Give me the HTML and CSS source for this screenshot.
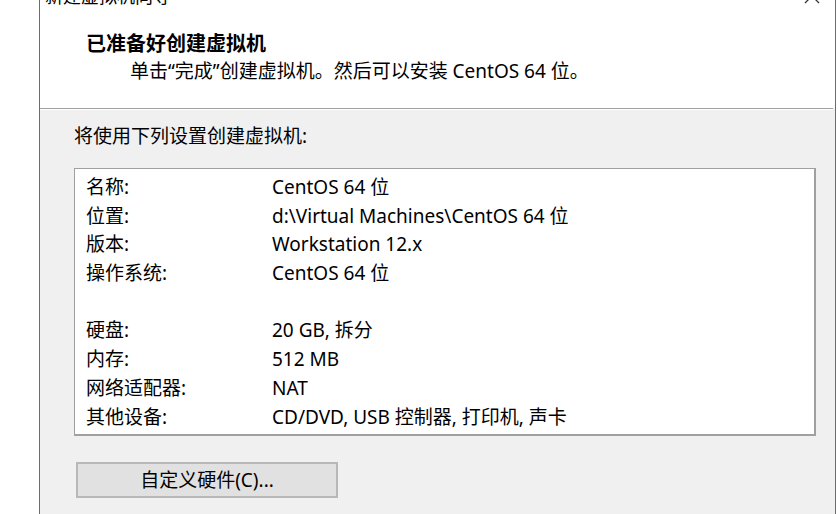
FILE: index.html
```html
<!DOCTYPE html>
<html lang="zh-CN">
<head>
<meta charset="utf-8">
<title>新建虚拟机向导</title>
<link rel="stylesheet" href="styles.css">
</head>
<body>
<div class="window">
  <div class="header">
    <div class="titlebar">
      <span class="title">新建虚拟机向导</span>
      <svg class="close" width="16" height="16" viewBox="0 0 16 16"><path d="M1 1 L15 15 M15 1 L1 15" stroke="#333" stroke-width="1.3" fill="none"/></svg>
    </div>
    <div class="heading">已准备好创建虚拟机</div>
    <div class="subtitle">单击“完成”创建虚拟机。然后可以安装 CentOS 64 位。</div>
  </div>
  <div class="separator"></div>
  <div class="content">
    <div class="intro">将使用下列设置创建虚拟机:</div>
    <div class="summary">
      <div class="row"><span class="label">名称:</span><span class="value">CentOS 64 位</span></div>
      <div class="row"><span class="label">位置:</span><span class="value">d:\Virtual Machines\CentOS 64 位</span></div>
      <div class="row"><span class="label">版本:</span><span class="value">Workstation 12.x</span></div>
      <div class="row"><span class="label">操作系统:</span><span class="value">CentOS 64 位</span></div>
      <div class="row"><span class="label"></span><span class="value"></span></div>
      <div class="row"><span class="label">硬盘:</span><span class="value">20 GB, 拆分</span></div>
      <div class="row"><span class="label">内存:</span><span class="value">512 MB</span></div>
      <div class="row"><span class="label">网络适配器:</span><span class="value">NAT</span></div>
      <div class="row"><span class="label">其他设备:</span><span class="value">CD/DVD, USB 控制器, 打印机, 声卡</span></div>
    </div>
    <button class="btn">自定义硬件(C)...</button>
  </div>
</div>
</body>
</html>
```
FILE: styles.css
```css
html, body {
  margin: 0;
  padding: 0;
  background: #ffffff;
  height: 514px;
  overflow: hidden;
}
body {
  font-family: "Noto Sans", "Noto Sans CJK SC", sans-serif;
  font-size: 19px;
  color: #000;
}
.window {
  margin-left: 39px;
  width: 795px;
  height: 514px;
  border-left: 1px solid #1a7fd6;
  border-right: 1px solid #1a7fd6;
  display: flex;
  flex-direction: column;
  background: #f0f0f0;
  overflow: hidden;
}
.header {
  background: #fff;
  height: 108px;
  flex: none;
}
.titlebar {
  display: flex;
  align-items: flex-end;
  justify-content: space-between;
  height: 20px;
  margin-top: -14px;
  padding-left: 5px;
  padding-right: 15px;
}
.title {
  font-size: 18px;
  line-height: 20px;
  color: #000;
}
.close {
  display: block;
  margin-bottom: 2px;
}
.heading {
  margin-top: 26px;
  margin-left: 46px;
  font-size: 20px;
  font-weight: bold;
  line-height: 24px;
}
.subtitle {
  margin-top: 3px;
  margin-left: 90px;
  line-height: 24px;
}
.separator {
  flex: none;
  height: 1px;
  background: #a0a0a0;
  margin-right: 2px;
  border-bottom: 1px solid #fff;
}
.content {
  flex: 1;
  padding: 14px 0 0 34px;
}
.intro {
  line-height: 24px;
}
.summary {
  margin-top: 20px;
  width: 739px;
  height: 265px;
  box-sizing: content-box;
  background: #fff;
  border: 1px solid #a0a0a0;
  border-bottom-width: 2px;
  border-right-width: 2px;
  padding: 4px 0 0 11px;
  box-sizing: border-box;
  width: 742px;
  height: 268px;
}
.row {
  display: grid;
  grid-template-columns: 186px 1fr;
  height: 28.7px;
  line-height: 28.7px;
}
.btn {
  display: block;
  margin-top: 26px;
  margin-left: 2px;
  width: 262px;
  height: 36px;
  background: #e1e1e1;
  border: 2px solid #b8b8b8;
  font-family: "Noto Sans", "Noto Sans CJK SC", sans-serif;
  font-size: 19px;
  color: #000;
  padding: 0;
  line-height: 30px;
}
```
